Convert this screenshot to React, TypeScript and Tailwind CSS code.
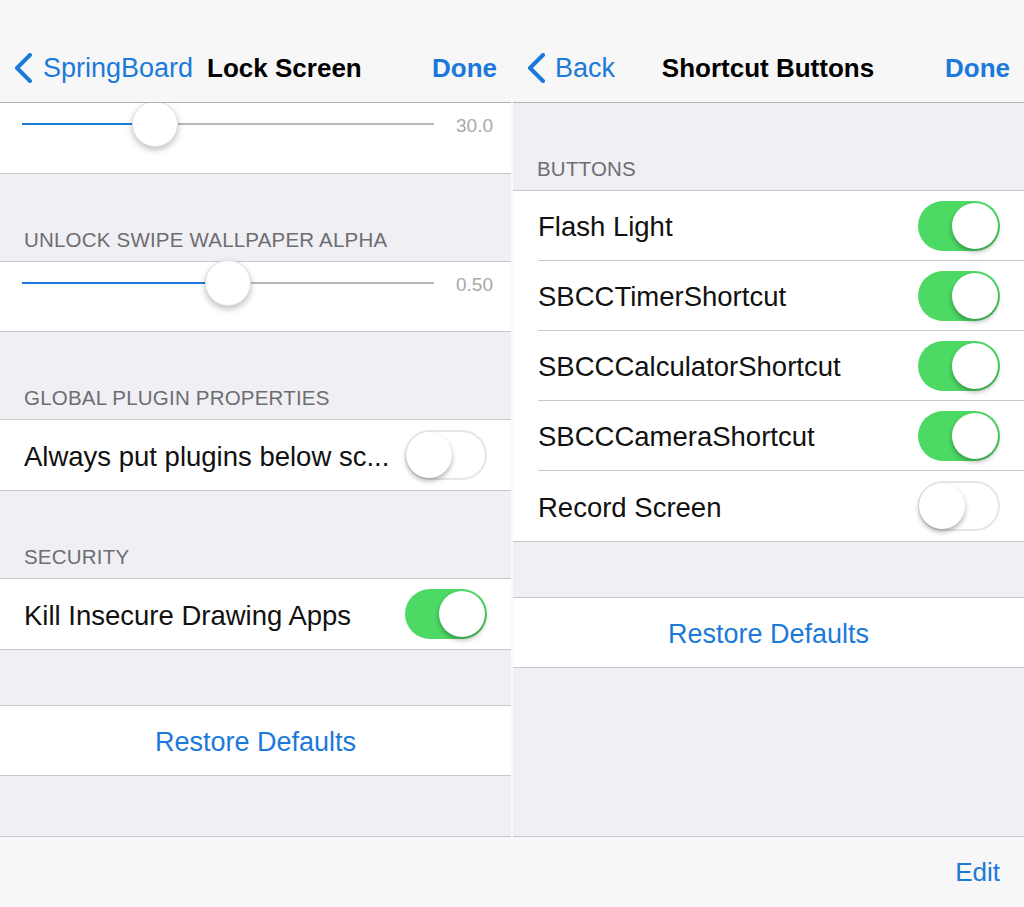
import React from "react";

const BLUE = "text-[#1b7ad9]";

const Chevron = () => (
  <svg width="20" height="30" viewBox="0 0 20 30" className="shrink-0">
    <polyline
      points="17,2 4,15 17,28"
      fill="none"
      stroke="#1b7ad9"
      strokeWidth="4"
      strokeLinecap="round"
      strokeLinejoin="round"
    />
  </svg>
);

const Toggle = ({ on }: { on: boolean }) => (
  <div
    className={`relative h-[50px] w-[82px] shrink-0 rounded-full ${
      on ? "bg-[#4cd964]" : "bg-white border-2 border-[#e6e6e6]"
    }`}
  >
    <div
      className={`absolute h-[46px] w-[46px] rounded-full bg-white shadow-[0_3px_5px_rgba(0,0,0,0.3)] ${
        on ? "right-[2px] top-[2px]" : "-left-[1px] top-0"
      }`}
    />
  </div>
);

const Slider = ({ pct, label }: { pct: number; label: string }) => (
  <div className="flex h-[42px] items-center pl-[22px] pr-[18px]">
    <div className="relative h-[42px] flex-1">
      <div className="absolute left-0 right-0 top-[20px] h-[2px] bg-[#b8b8b8]" />
      <div
        className="absolute left-0 top-[20px] h-[2px] bg-[#1b7ad9]"
        style={{ width: `calc(23px + (100% - 46px) * ${pct})` }}
      />
      <div
        className="absolute top-[-2px] h-[46px] w-[46px] rounded-full border border-[#e2e2e2] bg-white shadow-[0_3px_6px_rgba(0,0,0,0.25)]"
        style={{ left: `calc((100% - 46px) * ${pct})` }}
      />
    </div>
    <span className="ml-[22px] mt-[4px] text-[19px] text-[#a9a9a9]">{label}</span>
  </div>
);

const Header = ({ title, tall = true }: { title?: string; tall?: boolean }) => (
  <div
    className={`flex items-end border-b border-[#c8c7cc] px-[24px] pb-[11px] ${
      tall ? "h-[88px]" : "h-[56px]"
    }`}
  >
    {title && (
      <span className="text-[20.5px] leading-[20px] tracking-[0.2px] text-[#6d6d72]">
        {title}
      </span>
    )}
  </div>
);

const Row = ({
  label,
  on,
  inset = false,
  pad = 24,
}: {
  label: string;
  on: boolean;
  inset?: boolean;
  pad?: number;
}) => (
  <div className="bg-white" style={{ paddingLeft: pad }}>
    <div
      className={`flex h-[70px] items-center pr-[24px] ${
        inset ? "border-b border-[#c8c7cc]" : ""
      }`}
    >
      <span className="mt-[3px] flex-1 text-[27.5px] text-[#111]">{label}</span>
      <Toggle on={on} />
    </div>
  </div>
);

const NavBar = ({
  back,
  title,
  centered,
}: {
  back: string;
  title: string;
  centered?: boolean;
}) => (
  <div className="relative z-10 flex h-[103px] items-end border-b border-[#b2b2b6] bg-[#f7f7f8] pb-[19px] pl-[13px] pr-[14px]">
    {centered ? (
      <div className="grid h-[30px] w-full grid-cols-[1fr_auto_1fr] items-center leading-[30px]">
        <div className="flex items-center gap-[9px]">
          <Chevron />
          <span className={`text-[27px] ${BLUE}`}>{back}</span>
        </div>
        <span className="text-[26px] font-bold text-black">{title}</span>
        <span className={`text-right text-[26px] font-bold ${BLUE}`}>Done</span>
      </div>
    ) : (
      <div className="flex h-[30px] w-full items-center leading-[30px]">
        <Chevron />
        <span className={`ml-[10px] text-[27px] ${BLUE}`}>{back}</span>
        <span className="ml-[14px] flex-1 text-[26px] font-bold text-black">
          {title}
        </span>
        <span className={`text-[26px] font-bold ${BLUE}`}>Done</span>
      </div>
    )}
  </div>
);

const Restore = () => (
  <div className="flex h-[70px] items-center justify-center border-b border-[#c8c7cc] bg-white">
    <span className={`mt-[3px] text-[27px] ${BLUE}`}>Restore Defaults</span>
  </div>
);

export default function App() {
  return (
    <div
      className="flex h-[907px] w-[1024px] overflow-hidden bg-white"
      style={{ fontFamily: '"Liberation Sans", Arial, sans-serif' }}
    >
      {/* left: Lock Screen */}
      <div className="flex w-[511px] flex-col bg-[#efeff4]">
        <NavBar back="SpringBoard" title="Lock Screen" />
        <div className="h-[71px] border-b border-[#c8c7cc] bg-white">
          <Slider pct={0.3} label="30.0" />
        </div>
        <Header title="UNLOCK SWIPE WALLPAPER ALPHA" />
        <div className="h-[70px] border-b border-[#c8c7cc] bg-white">
          <Slider pct={0.5} label="0.50" />
        </div>
        <Header title="GLOBAL PLUGIN PROPERTIES" />
        <div className="border-b border-[#c8c7cc]">
          <Row label="Always put plugins below sc..." on={false} />
        </div>
        <Header title="SECURITY" />
        <div className="border-b border-[#c8c7cc]">
          <Row label="Kill Insecure Drawing Apps" on />
        </div>
        <Header tall={false} />
        <Restore />
        <div className="flex-1 border-b border-[#c8c7cc]" />
        <div className="h-[70px] bg-[#f7f7f8]" />
      </div>

      <div className="w-[2px] bg-[#fafafa]" />

      {/* right: Shortcut Buttons */}
      <div className="flex w-[511px] flex-col bg-[#efeff4]">
        <NavBar back="Back" title="Shortcut Buttons" centered />
        <Header title="BUTTONS" tall />
        <div className="border-b border-[#c8c7cc]">
          <Row label="Flash Light" on inset pad={25} />
          <Row label="SBCCTimerShortcut" on inset pad={25} />
          <Row label="SBCCCalculatorShortcut" on inset pad={25} />
          <Row label="SBCCCameraShortcut" on inset pad={25} />
          <Row label="Record Screen" on={false} pad={25} />
        </div>
        <Header tall={false} />
        <Restore />
        <div className="flex-1 border-b border-[#c8c7cc]" />
        <div className="flex h-[70px] items-center justify-end bg-[#f7f7f8] pr-[24px]">
          <span className={`text-[26px] ${BLUE}`}>Edit</span>
        </div>
      </div>
    </div>
  );
}
